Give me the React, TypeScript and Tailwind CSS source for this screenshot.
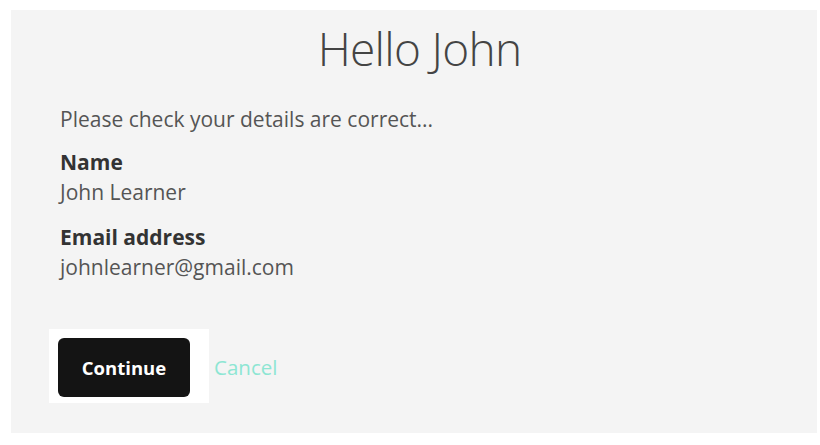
import React from 'react';

const Field = ({ label, value }: { label: string; value: string }) => (
  <div className="flex flex-col">
    <span className="text-[21px] leading-[30px] font-bold text-[#333333]">{label}</span>
    <span className="text-[21px] leading-[30px] text-[#555555]">{value}</span>
  </div>
);

export default function App() {
  return (
    <div className="w-[820px] h-[445px] bg-white pt-[10px] pl-[11px] pr-[3px] font-['Open_Sans',sans-serif]">
      <div className="h-[423px] bg-[#f4f4f4] flex flex-col">
        <h1 className="text-center pl-[11px] text-[46px] leading-[56px] tracking-[-0.7px] font-light text-[#444444] mt-[10px]">
          Hello John
        </h1>
        <div className="pl-[49px] pt-[28px] flex flex-col">
          <p className="text-[21px] leading-[30px] text-[#555555]">Please check your details are correct...</p>
          <div className="mt-[13px] flex flex-col gap-[15px]">
            <Field label="Name" value="John Learner" />
            <Field label="Email address" value="johnlearner@gmail.com" />
          </div>
        </div>
        <div className="pl-[38px] mt-[47px] flex items-center">
          <div className="bg-white pt-[9px] pl-[9px] pb-[6px] pr-[19px]">
            <button className="w-[132px] h-[59px] rounded-[6px] bg-[#141414] text-white font-bold text-[18.5px]">
              Continue
            </button>
          </div>
          <a className="ml-[5px] mt-[2px] text-[20.5px] text-[#8de6d3]">Cancel</a>
        </div>
      </div>
    </div>
  );
}
